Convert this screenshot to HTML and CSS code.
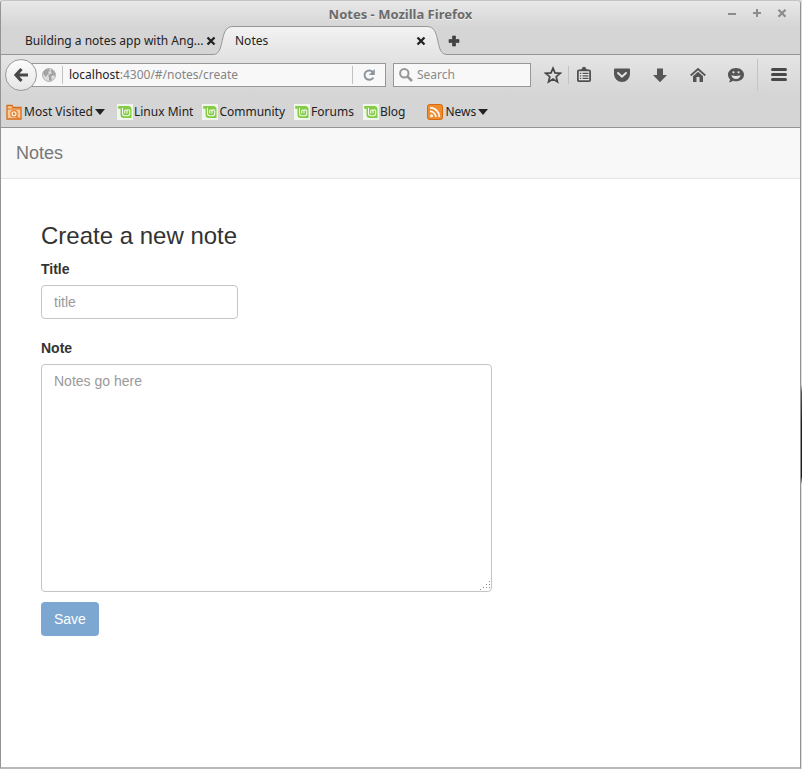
FILE: index.html
```html
<!DOCTYPE html>
<html lang="en">
<head>
<meta charset="utf-8">
<meta name="viewport" content="width=device-width, initial-scale=1">
<title>Notes - Mozilla Firefox</title>
<link rel="stylesheet" href="styles.css">
</head>
<body>
<svg class="defs" aria-hidden="true">
  <symbol id="mint" viewBox="0 0 16 16">
    <rect width="16" height="16" fill="#f1f6ec"/>
    <path d="M1.200 2h9.800a3.500 3.500 0 0 1 3.500 3.500V14H7a3.500 3.500 0 0 1-3.500-3.500V4.800H1.200z" fill="#83cb45"/>
    <path d="M5.500 3.800v5.700a2.200 2.200 0 0 0 2.200 2.200h2.800a2.200 2.200 0 0 0 2.200-2.200V6.800a1.400 1.400 0 0 0-2.700 0v2.600M10 6.800a1.200 1.200 0 0 0-2.300 0v2.600" fill="none" stroke="#f4faef" stroke-width="1.100"/>
  </symbol>
  <symbol id="cross" viewBox="0 0 10 10">
    <path d="M1.500 1.500l7 7M8.500 1.500l-7 7" stroke="currentColor" stroke-width="2.300"/>
  </symbol>
</svg>
<div class="window">
  <header class="chrome">
    <div class="titlebar">
      <span class="window-title">Notes - Mozilla Firefox</span>
      <div class="window-buttons">
        <button aria-label="Minimize"><svg width="10" height="10" viewBox="0 0 10 10"><path d="M1 5h8" stroke="currentColor" stroke-width="2"/></svg></button>
        <button aria-label="Maximize"><svg width="10" height="10" viewBox="0 0 10 10"><path d="M1 4h8M5 0v8" stroke="currentColor" stroke-width="2"/></svg></button>
        <button aria-label="Close window"><svg width="10" height="10" viewBox="0 0 10 10"><path d="M1.500 .7l7 7M8.500 .7l-7 7" stroke="currentColor" stroke-width="2.200"/></svg></button>
      </div>
    </div>
    <div class="tabs">
      <div class="tab">
        <span class="tab-label">Building a notes app with Ang...</span>
        <button aria-label="Close tab"><svg width="10" height="10"><use href="#cross"/></svg></button>
      </div>
      <div class="tab-current">
        <svg class="curve" width="20" height="29" viewBox="0 0 20 29">
          <defs><linearGradient id="tabfill" x1="0" y1="0" x2="0" y2="1"><stop offset="0" stop-color="#f2f2f2"/><stop offset="1" stop-color="#e4e4e4"/></linearGradient></defs>
          <path d="M0 29V28C13 28 5 .5 20 .5V29z" fill="url(#tabfill)"/>
          <path d="M0 28.500C13 28.500 5 .5 20 .5" fill="none" stroke="#969696"/>
        </svg>
        <div class="tab-body">
          <span class="tab-label">Notes</span>
          <button aria-label="Close tab"><svg width="10" height="10"><use href="#cross"/></svg></button>
        </div>
        <svg class="curve" width="20" height="29" viewBox="0 0 20 29">
          <path d="M20 29V28C7 28 15 .5 0 .5V29z" fill="url(#tabfill)"/>
          <path d="M20 28.500C7 28.500 15 .5 0 .5" fill="none" stroke="#969696"/>
        </svg>
      </div>
      <button class="new-tab" aria-label="New tab"><svg width="12" height="12" viewBox="0 0 12 12"><path d="M4.500 1h3v3.500H11v3H7.500V11h-3V7.500H1v-3h3.500z" fill="#444" stroke="#333" stroke-width=".6"/></svg></button>
    </div>
    <div class="toolbar">
      <button class="back" aria-label="Back"><svg width="16" height="16" viewBox="0 0 16 16"><path d="M8.500 2L3 8l5.500 6M3.500 8H15" fill="none" stroke="#484848" stroke-width="3.200"/></svg></button>
      <div class="address">
        <svg width="14" height="14" viewBox="0 0 14 14"><circle cx="7" cy="7" r="6.500" fill="#dcdcdc" stroke="#b1b1b1"/><path d="M1 5C2 2 4 1 7 1l1 2-2 1 1 2-2 1-1 2-2-2zM9 1.500C12 2.500 13.500 5 13 8l-2-1-2 2 1 3-3 1V9L6 8l2-2 2-.5-1-2z" fill="#a2a2a2"/></svg>
        <span class="divider"></span>
        <span class="url"><b>localhost</b>:4300/#/notes/create</span>
        <span class="divider"></span>
        <button class="reload" aria-label="Reload"><svg width="14" height="14" viewBox="0 0 14 14"><path d="M10.800 4A4.700 4.700 0 1 0 11.300 9.500" fill="none" stroke="#8c959d" stroke-width="2"/><path d="M12.800 1v6h-6z" fill="#8c959d"/></svg></button>
      </div>
      <label class="search">
        <svg width="16" height="16" viewBox="0 0 16 16"><circle cx="6.300" cy="6.300" r="4.200" fill="none" stroke="#979797" stroke-width="2"/><path d="M9.300 9.300l4.700 4.700" stroke="#979797" stroke-width="2.600"/></svg>
        <input type="text" placeholder="Search" aria-label="Search">
      </label>
      <div class="tools">
        <button aria-label="Bookmark this page"><svg width="18" height="18" viewBox="0 0 18 18"><path d="M9 2.200l2 4.700 5.200.4-4 3.400 1.300 5.200L9 13.100l-4.500 2.800 1.300-5.200-4-3.400L7 6.900z" fill="none" stroke="#484848" stroke-width="1.700"/></svg></button>
        <span class="divider"></span>
        <button aria-label="Bookmarks"><svg width="18" height="18" viewBox="0 0 18 18"><path d="M5 4l2-1.200a2 2 0 0 1 4 0L13 4z" fill="#505050"/><rect x="2.900" y="4.400" width="12.200" height="10.700" rx="1" fill="#e8e8e8" stroke="#505050" stroke-width="1.800"/><path d="M4.800 7.300h1.500m1.200 0h6M4.800 9.800h1.500m1.200 0h6M4.800 12.300h1.500m1.200 0h6" stroke="#505050" stroke-width="1.200"/></svg></button>
        <button aria-label="Save to Pocket"><svg width="18" height="18" viewBox="0 0 18 18"><path d="M2 2.500h14a1 1 0 0 1 1 1V8a8 8 0 0 1-16 0V3.500a1 1 0 0 1 1-1z" fill="#555"/><path d="M5 7l4 3.700L13 7" fill="none" stroke="#e3e3e3" stroke-width="2" stroke-linecap="round"/></svg></button>
        <button aria-label="Downloads"><svg width="18" height="18" viewBox="0 0 18 18"><path d="M6 2.500h6V9h4l-7 7.200L2 9h4z" fill="#555"/></svg></button>
        <button aria-label="Home"><svg width="18" height="18" viewBox="0 0 18 18"><path d="M1.700 9.500L9 3l7.300 6.500" fill="none" stroke="#555" stroke-width="1.700"/><path d="M4 10.300l5-4.500 5 4.500V16h-3.500v-5h-3v5H4z" fill="#555"/></svg></button>
        <button aria-label="Start a conversation"><svg width="18" height="18" viewBox="0 0 18 18"><path d="M9 2c4.500 0 8 2.900 8 6.700s-3.500 6.600-8 6.600c-1.200 0-2-.1-3-.5-1.400 1-2.800 1.500-4.200 1.500 1-1 1.400-2 1.200-3.100C1.700 12 1 10.500 1 8.700 1 4.900 4.500 2 9 2z" fill="#555"/><circle cx="6.500" cy="6.300" r="1.100" fill="#e3e3e3"/><circle cx="11.500" cy="6.300" r="1.100" fill="#e3e3e3"/><path d="M4.300 9.300q4.700 1.200 9.400 0-1 3.700-4.700 3.700t-4.700-3.700z" fill="#e3e3e3"/></svg></button>
      </div>
      <button class="menu" aria-label="Open menu"><svg width="18" height="18" viewBox="0 0 18 18"><path d="M2.500 3.500h13M2.500 8.500h13M2.500 13.500h13" stroke="#484848" stroke-width="3" stroke-linecap="round"/></svg></button>
    </div>
    <nav class="bookmarks" aria-label="Bookmarks">
      <button><svg width="16" height="16" viewBox="0 0 16 16"><path d="M1 3V1.500h5l1 2h8V15H1z" fill="#f9c894" stroke="#d66b18" stroke-width="1.300"/><path d="M1.500 5h13" stroke="#d9772b" stroke-width="1"/><circle cx="8" cy="9.800" r="3.200" fill="#fff0dd" stroke="#dd7a2c" stroke-width="1.200"/><circle cx="8" cy="9.800" r="1.200" fill="#dd7a2c"/><path d="M10.300 12.200l2.300 2.300" stroke="#dd7a2c" stroke-width="1.500"/></svg>Most Visited<i class="caret"></i></button>
      <a href="#"><svg width="16" height="16"><use href="#mint"/></svg>Linux Mint</a>
      <a href="#"><svg width="16" height="16"><use href="#mint"/></svg>Community</a>
      <a href="#"><svg width="16" height="16"><use href="#mint"/></svg>Forums</a>
      <a href="#"><svg width="16" height="16"><use href="#mint"/></svg>Blog</a>
      <button class="feed"><svg width="16" height="16" viewBox="0 0 16 16"><rect x=".5" y=".5" width="15" height="15" rx="2" fill="#f28b2c" stroke="#d46a12"/><circle cx="4.500" cy="11.800" r="1.500" fill="#fff"/><path d="M3 7.300a5.800 5.800 0 0 1 5.800 5.800M3 3.700a9.400 9.400 0 0 1 9.400 9.400" fill="none" stroke="#fff" stroke-width="1.700"/></svg>News<i class="caret"></i></button>
    </nav>
  </header>
  <nav class="navbar"><a href="#">Notes</a></nav>
  <main>
    <form>
      <h1>Create a new note</h1>
      <label for="title">Title</label>
      <input class="field" id="title" type="text" placeholder="title">
      <label for="note">Note</label>
      <div class="note-box">
        <textarea class="field" id="note" placeholder="Notes go here"></textarea>
        <svg class="grip" width="11" height="11" viewBox="0 0 11 11" aria-hidden="true"><path d="M9.500 1v9M6.500 4v6M3.500 7v3M.5 9v1" stroke="#888" stroke-dasharray="1 2"/></svg>
      </div>
      <button class="save" type="button">Save</button>
    </form>
  </main>
</div>
</body>
</html>
```
FILE: styles.css
```css
* {
  box-sizing: border-box;
}

body {
  margin: 0;
  padding-right: 1px;
  min-height: 100vh;
  display: flex;
  background: linear-gradient(#ddd 50%, #555 51%, #1c1c1c 55%, #1c1c1c 62%, #ddd 63%);
  font-family: "Liberation Sans", sans-serif;
  font-size: 14px;
  line-height: 20px;
  color: #333;
}

button {
  border: 0;
  padding: 0;
  background: none;
  color: inherit;
  font: inherit;
}

a {
  color: inherit;
  text-decoration: none;
}

svg {
  display: block;
  flex: none;
}

.defs {
  position: absolute;
  width: 0;
  height: 0;
}

.window {
  flex: 1;
  min-width: 0;
  border: 1px solid #949494;
  border-top-color: #c4c4c4;
  border-bottom: 2px solid #b9b9b9;
  border-radius: 4px 4px 0 0;
  background: #fff;
  overflow: hidden;
}

/* Browser chrome */
.chrome {
  border-bottom: 1px solid #949494;
  background: #d5d5d5;
  font-family: "Noto Sans", sans-serif;
  font-size: 12px;
  color: #222;
}

.titlebar {
  display: grid;
  grid-template-columns: 1fr auto 1fr;
  align-items: center;
  height: 25px;
  background: linear-gradient(#e8e8e8, #d6d6d6);
  color: #6b6b6b;
}

.window-title {
  grid-column: 2;
  font-size: 13px;
  font-weight: bold;
  text-shadow: 0 1px #f0f0f0;
}

.window-buttons {
  display: flex;
  justify-content: flex-end;
  gap: 15px;
  padding-right: 13px;
  color: #8c8c8c;
}

.tabs {
  display: flex;
  height: 29px;
  box-shadow: inset 0 -1px #969696;
}

.tab {
  display: flex;
  align-items: center;
  justify-content: space-between;
  width: 215px;
  padding-left: 24px;
}

.tab-current {
  display: flex;
  margin-left: -3px;
}

.tab-body {
  display: flex;
  align-items: center;
  justify-content: space-between;
  width: 194px;
  padding: 0 1px 0 2px;
  border-top: 1px solid #969696;
  background: linear-gradient(#f2f2f2, #e4e4e4);
}

.new-tab {
  padding: 0 0 0 1px;
}

.toolbar {
  display: flex;
  align-items: center;
  height: 40px;
  padding-left: 4px;
  background: linear-gradient(#e5e5e5, #d5d5d5);
}

.back {
  z-index: 1;
  display: grid;
  place-items: center;
  width: 32px;
  height: 32px;
  border: 1px solid #999;
  border-radius: 50%;
  background: linear-gradient(#fcfcfc, #e6e6e6);
}

.address,
.search {
  display: flex;
  align-items: center;
  height: 24px;
  border: 1px solid #979797;
  background: #f8f8f8;
}

.address {
  flex: 1;
  gap: 6px;
  margin-left: -7px;
  padding-left: 11px;
  min-width: 0;
}

.divider {
  width: 1px;
  height: 18px;
  background: #c2c2c2;
}

.url {
  flex: 1;
  color: #858585;
}

.url b {
  color: #222;
  font-weight: normal;
}

.reload {
  padding: 0 9px 0 3px;
}

.search {
  width: 138px;
  margin-left: 7px;
  padding-left: 4px;
  gap: 3px;
}

.search input {
  width: 100%;
  min-width: 0;
  border: 0;
  padding: 0;
  background: none;
  font: inherit;
}

.search input::placeholder {
  color: #8a8a8a;
}

.tools {
  display: flex;
  align-items: center;
  gap: 20px;
  padding: 0 12px 0 13px;
}

.tools .divider {
  margin: 0 -14px;
}

.menu {
  height: 32px;
  padding: 0 12px;
  border-left: 1px solid #c4c4c4;
}

.bookmarks {
  display: flex;
  align-items: center;
  gap: 9px;
  height: 32px;
  padding: 1px 0 0 5px;
}

.bookmarks > * {
  display: flex;
  align-items: center;
  gap: 1px;
}

.bookmarks > button {
  gap: 2px;
}

.bookmarks > button:first-child {
  margin-right: 3px;
}

.bookmarks .feed {
  margin-left: 13px;
}

.caret {
  border: 5px solid transparent;
  border-top: 6px solid #222;
  border-bottom: 0;
}

/* Notes page */
.navbar {
  padding: 15px;
  border-bottom: 1px solid #e4e4e4;
  background: #f8f8f8;
  color: #777;
  font-size: 18px;
}

main {
  padding: 40px;
}

h1 {
  margin: 4px 0 10px;
  font-size: 24px;
  font-weight: normal;
  line-height: 26px;
}

label[for] {
  display: block;
  margin-bottom: 6px;
  font-weight: bold;
}

.field {
  display: block;
  padding: 6px 12px;
  border: 1px solid #c4c4c4;
  border-radius: 4px;
  background: #fff;
  color: #555;
  font: inherit;
}

.field::placeholder {
  color: #999;
}

#title {
  width: 197px;
  height: 34px;
  margin-bottom: 19px;
}

.note-box {
  position: relative;
  width: 451px;
  max-width: 100%;
  margin-bottom: 10px;
}

#note {
  width: 100%;
  height: 228px;
  resize: none;
}

.grip {
  position: absolute;
  right: 1px;
  bottom: 1px;
}

.save {
  height: 34px;
  padding: 0 13px;
  border-radius: 4px;
  background: #7ba7d1;
  color: #fff;
}
```
